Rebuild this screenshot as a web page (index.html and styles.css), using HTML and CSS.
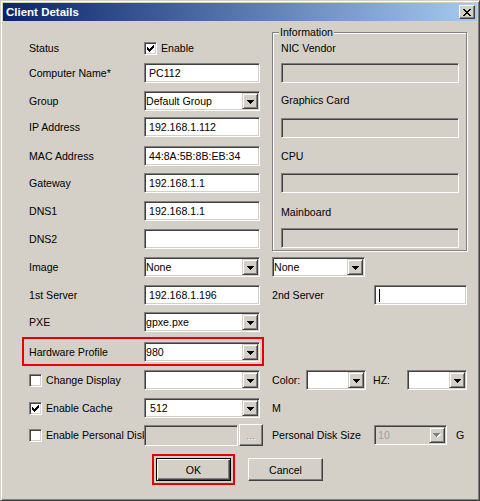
FILE: index.html
```html
<!DOCTYPE html>
<html>
<head>
<meta charset="utf-8">
<title>Client Details</title>
<link rel="stylesheet" href="styles.css">
</head>
<body>
<div class="window">
  <div class="titlebar">
    <span class="title">Client Details</span>
    <span class="close"><svg width="8" height="7" viewBox="0 0 8 7" shape-rendering="crispEdges"><path d="M0 0h2v1h-2z M6 0h2v1h-2z M1 1h2v1h-2z M5 1h2v1h-2z M2 2h4v1h-4z M3 3h2v1h-2z M2 4h4v1h-4z M1 5h2v1h-2z M5 5h2v1h-2z M0 6h2v1h-2z M6 6h2v1h-2z" fill="#000"/></svg></span>
  </div>
  <div class="form">
    <div class="grid">
      <div class="lbl c1">Status</div>
      <div class="cell c2">
        <span class="chk"><svg width="7" height="7" viewBox="0 0 7 7" shape-rendering="crispEdges"><path d="M6 0h1v1h-1z M5 1h2v1h-2z M0 2h1v1h-1z M4 2h3v1h-3z M0 3h2v1h-2z M3 3h3v1h-3z M0 4h5v1h-5z M1 5h3v1h-3z M2 6h1v1h-1z" fill="#000"/></svg></span>
        <span>Enable</span>
      </div>
      <div class="info c3">
        <span class="legend">Information</span>
        <div class="info-lbl first">NIC Vendor</div>
        <div class="field disabled wide gap5"></div>
        <div class="info-lbl gap7">Graphics Card</div>
        <div class="field disabled wide gap8"></div>
        <div class="info-lbl gap8">CPU</div>
        <div class="field disabled wide gap7"></div>
        <div class="info-lbl gap9">Mainboard</div>
        <div class="field disabled wide gap6"></div>
      </div>

      <div class="lbl c1">Computer Name*</div>
      <div class="field input c2">PC112</div>

      <div class="lbl c1">Group</div>
      <div class="field select c2"><span class="val">Default Group</span><span class="dd"><svg width="7" height="4" viewBox="0 0 7 4" shape-rendering="crispEdges"><path d="M0 0h7v1h-7z M1 1h5v1h-5z M2 2h3v1h-3z M3 3h1v1h-1z" fill="#000"/></svg></span></div>

      <div class="lbl c1">IP Address</div>
      <div class="field input c2">192.168.1.112</div>

      <div class="lbl c1">MAC Address</div>
      <div class="field input c2">44:8A:5B:8B:EB:34</div>

      <div class="lbl c1">Gateway</div>
      <div class="field input c2">192.168.1.1</div>

      <div class="lbl c1">DNS1</div>
      <div class="field input c2">192.168.1.1</div>

      <div class="lbl c1">DNS2</div>
      <div class="field input c2"></div>

      <div class="lbl c1">Image</div>
      <div class="field select c2"><span class="val">None</span><span class="dd"><svg width="7" height="4" viewBox="0 0 7 4" shape-rendering="crispEdges"><path d="M0 0h7v1h-7z M1 1h5v1h-5z M2 2h3v1h-3z M3 3h1v1h-1z" fill="#000"/></svg></span></div>
      <div class="right c3">
        <div class="field select w93"><span class="val">None</span><span class="dd"><svg width="7" height="4" viewBox="0 0 7 4" shape-rendering="crispEdges"><path d="M0 0h7v1h-7z M1 1h5v1h-5z M2 2h3v1h-3z M3 3h1v1h-1z" fill="#000"/></svg></span></div>
      </div>

      <div class="lbl c1">1st Server</div>
      <div class="field input c2">192.168.1.196</div>
      <div class="right c3">
        <span class="rlbl w102">2nd Server</span>
        <div class="field input w93"><span class="caret"></span></div>
      </div>

      <div class="lbl c1">PXE</div>
      <div class="field select c2"><span class="val">gpxe.pxe</span><span class="dd"><svg width="7" height="4" viewBox="0 0 7 4" shape-rendering="crispEdges"><path d="M0 0h7v1h-7z M1 1h5v1h-5z M2 2h3v1h-3z M3 3h1v1h-1z" fill="#000"/></svg></span></div>

      <div class="highlight">
        <div class="lbl hl-lbl">Hardware Profile</div>
        <div class="field select hl-field"><span class="val">980</span><span class="dd"><svg width="7" height="4" viewBox="0 0 7 4" shape-rendering="crispEdges"><path d="M0 0h7v1h-7z M1 1h5v1h-5z M2 2h3v1h-3z M3 3h1v1h-1z" fill="#000"/></svg></span></div>
      </div>

      <div class="cell c1 chkrow"><span class="chk"></span><span>Change Display</span></div>
      <div class="field select c2"><span class="val"></span><span class="dd"><svg width="7" height="4" viewBox="0 0 7 4" shape-rendering="crispEdges"><path d="M0 0h7v1h-7z M1 1h5v1h-5z M2 2h3v1h-3z M3 3h1v1h-1z" fill="#000"/></svg></span></div>
      <div class="right c3">
        <span class="rlbl w34">Color:</span>
        <div class="field select w60"><span class="val"></span><span class="dd"><svg width="7" height="4" viewBox="0 0 7 4" shape-rendering="crispEdges"><path d="M0 0h7v1h-7z M1 1h5v1h-5z M2 2h3v1h-3z M3 3h1v1h-1z" fill="#000"/></svg></span></div>
        <span class="rlbl hz">HZ:</span>
        <div class="field select w60"><span class="val"></span><span class="dd"><svg width="7" height="4" viewBox="0 0 7 4" shape-rendering="crispEdges"><path d="M0 0h7v1h-7z M1 1h5v1h-5z M2 2h3v1h-3z M3 3h1v1h-1z" fill="#000"/></svg></span></div>
      </div>

      <div class="cell c1 chkrow"><span class="chk"><svg width="7" height="7" viewBox="0 0 7 7" shape-rendering="crispEdges"><path d="M6 0h1v1h-1z M5 1h2v1h-2z M0 2h1v1h-1z M4 2h3v1h-3z M0 3h2v1h-2z M3 3h3v1h-3z M0 4h5v1h-5z M1 5h3v1h-3z M2 6h1v1h-1z" fill="#000"/></svg></span><span>Enable Cache</span></div>
      <div class="field select c2"><span class="val pad">512</span><span class="dd"><svg width="7" height="4" viewBox="0 0 7 4" shape-rendering="crispEdges"><path d="M0 0h7v1h-7z M1 1h5v1h-5z M2 2h3v1h-3z M3 3h1v1h-1z" fill="#000"/></svg></span></div>
      <div class="right c3"><span class="rlbl">M</span></div>

      <div class="cell c1 chkrow"><span class="chk"></span><span class="nowrap">Enable Personal Disk</span></div>
      <div class="cell c2 disk">
        <div class="field disabled disk-input"></div>
        <span class="browse">...</span>
      </div>
      <div class="right c3">
        <span class="rlbl w102">Personal Disk Size</span>
        <div class="field select disabled w73"><span class="val dis-text">10</span><span class="dd"><svg width="8" height="5" viewBox="0 0 8 5" shape-rendering="crispEdges"><path d="M1 1h7v1h-7z M2 2h5v1h-5z M3 3h3v1h-3z M4 4h1v1h-1z" fill="#fff"/><path d="M0 0h7v1h-7z M1 1h5v1h-5z M2 2h3v1h-3z M3 3h1v1h-1z" fill="#808080"/></svg></span></div>
        <span class="rlbl g">G</span>
      </div>
    </div>

    <div class="buttons">
      <div class="ok-wrap"><span class="btn default">OK</span></div>
      <span class="btn cancel">Cancel</span>
    </div>
  </div>
</div>
</body>
</html>
```

FILE: styles.css
```css
html, body {
  margin: 0;
  padding: 0;
  background: #d4d0c8;
}

body {
  font-family: "Liberation Sans", Arial, sans-serif;
  font-size: 10.6px;
  color: #000;
}

.window {
  width: 480px;
  height: 501px;
  box-sizing: border-box;
  background: #d4d0c8;
  border: 1px solid;
  border-color: #d4d0c8 #404040 #404040 #d4d0c8;
  box-shadow: inset 1px 1px 0 #fff, inset -1px -1px 0 #808080;
  padding: 2px;
}

.titlebar {
  height: 18px;
  background: linear-gradient(to right, #0a246a, #a6caf0);
  display: flex;
  align-items: center;
  justify-content: space-between;
  padding: 0 2px 0 3px;
}

.title {
  color: #fff;
  font-weight: bold;
  font-size: 11.5px;
}

.close {
  width: 16px;
  height: 14px;
  box-sizing: border-box;
  background: #d4d0c8;
  border: 1px solid;
  border-color: #fff #404040 #404040 #fff;
  box-shadow: inset -1px -1px 0 #808080;
  display: flex;
  align-items: center;
  justify-content: center;
  padding-right: 1px;
}

.close svg { display: block; }

.form {
  padding: 17px 0 0 26px;
}

.grid {
  display: grid;
  grid-template-columns: 115px 116px 12px 196px;
  grid-template-rows: 25px 28px 26px 29px 27px 28px 28px 28px 28px 27px 30px 28px 28px 27px 29px;
  align-items: start;
}

.c1 { grid-column: 1; }
.c2 { grid-column: 2; }
.c3 { grid-column: 4; }

.lbl {
  height: 20px;
  line-height: 20px;
  white-space: nowrap;
}

.cell {
  height: 20px;
  display: flex;
  align-items: center;
  gap: 4px;
  white-space: nowrap;
}

.nowrap { white-space: nowrap; }

.chk {
  width: 13px;
  height: 13px;
  box-sizing: border-box;
  flex: none;
  background: #fff;
  border: 1px solid;
  border-color: #808080 #fff #fff #808080;
  box-shadow: inset 1px 1px 0 #404040, inset -1px -1px 0 #d4d0c8;
  padding: 2px;
}

.chk svg { display: block; }

.field {
  height: 20px;
  box-sizing: border-box;
  background: #fff;
  border: 1px solid;
  border-color: #808080 #fff #fff #808080;
  box-shadow: inset 1px 1px 0 #404040, inset -1px -1px 0 #d4d0c8;
  padding: 1px;
  line-height: 16px;
  white-space: nowrap;
  overflow: hidden;
}

.input {
  padding-left: 4px;
}

.select {
  display: flex;
  align-items: stretch;
}

.select .val {
  flex: 1;
  padding-left: 0;
  overflow: hidden;
}

.select .val.pad { padding-left: 4px; }

.dd {
  width: 16px;
  height: 16px;
  box-sizing: border-box;
  flex: none;
  background: #d4d0c8;
  border: 1px solid;
  border-color: #d4d0c8 #404040 #404040 #d4d0c8;
  box-shadow: inset 1px 1px 0 #fff, inset -1px -1px 0 #808080;
  display: flex;
  align-items: center;
  justify-content: center;
  padding-top: 1px;
}

.dd svg { display: block; }

.disabled {
  background: #d4d0c8;
}

.dis-text {
  color: #a0a0a0;
  padding-left: 2px !important;
}

/* Information group */
.info {
  grid-row: 1 / 9;
  align-self: start;
  position: relative;
  margin-top: -6px;
  width: 195px;
  height: 219px;
  box-sizing: border-box;
  border: 1px solid #808080;
  box-shadow: inset 1px 1px 0 #fff, 1px 1px 0 #fff;
  padding: 5px 0 0 8px;
  display: flex;
  flex-direction: column;
}

.legend {
  position: absolute;
  top: -7px;
  left: 6px;
  background: #d4d0c8;
  padding: 0 1px;
  line-height: 13px;
}

.info-lbl {
  height: 20px;
  line-height: 20px;
}

.wide { width: 178px; flex: none; }

.gap5 { margin-top: 5px; }
.gap6 { margin-top: 6px; }
.gap7 { margin-top: 7px; }
.gap8 { margin-top: 8px; }
.gap9 { margin-top: 9px; }

/* right column rows */
.right {
  height: 20px;
  display: flex;
  align-items: center;
}

.rlbl {
  flex: none;
  white-space: nowrap;
  line-height: 20px;
}

.w34 { width: 34px; }
.w60 { width: 60px; flex: none; }
.w73 { width: 73px; flex: none; }
.w93 { width: 93px; flex: none; }
.w102 { width: 102px; }

.hz {
  width: 41px;
  box-sizing: border-box;
  padding-left: 7px;
}

.g { margin-left: 9px; }

.caret {
  display: inline-block;
  width: 1px;
  height: 13px;
  background: #000;
  vertical-align: middle;
  margin-top: -2px;
}

/* highlighted hardware profile row */
.highlight {
  grid-column: 1 / 3;
  grid-row: 12;
  display: flex;
  height: 29px;
  box-sizing: border-box;
  border: 2px solid #e60000;
  margin: -5px -4px 0 -7px;
  padding: 3px 2px 0 5px;
}

.hl-lbl { width: 115px; flex: none; }
.hl-field { width: 116px; flex: none; }

/* personal disk */
.disk {
  gap: 1px;
  align-items: flex-start;
  z-index: 1;
}

.disk-input {
  width: 94px;
  height: 21px;
  flex: none;
}

.browse {
  width: 24px;
  height: 22px;
  margin-top: -1px;
  box-sizing: border-box;
  flex: none;
  background: #d4d0c8;
  border: 1px solid;
  border-color: #fff #404040 #404040 #fff;
  box-shadow: inset -1px -1px 0 #808080;
  color: #808080;
  text-shadow: 1px 1px 0 #fff;
  font-size: 9px;
  display: flex;
  align-items: center;
  justify-content: center;
  padding-top: 2px;
  letter-spacing: 0.5px;
}

/* buttons */
.buttons {
  display: flex;
  align-items: flex-start;
  gap: 13px;
  padding-left: 123px;
}

.ok-wrap {
  border: 2px solid #e60000;
  padding: 2px;
}

.btn {
  width: 75px;
  height: 23px;
  box-sizing: border-box;
  display: flex;
  align-items: center;
  justify-content: center;
  background: #d4d0c8;
}

.default {
  border: 1px solid #000;
  box-shadow: inset 1px 1px 0 #fff, inset -1px -1px 0 #404040, inset -2px -2px 0 #808080;
}

.cancel {
  margin-top: 4px;
  border: 1px solid;
  border-color: #fff #404040 #404040 #fff;
  box-shadow: inset -1px -1px 0 #808080;
}
```
